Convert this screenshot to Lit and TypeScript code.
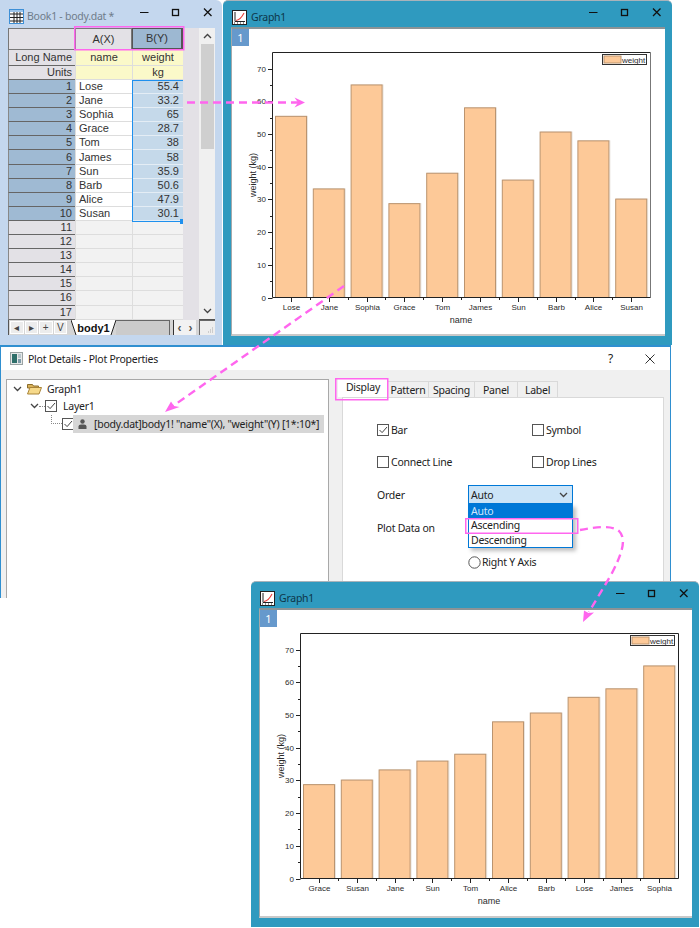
import { LitElement, html, css, svg } from "lit";
import { customElement, property } from "lit/decorators.js";

type Datum = [string, number];
const DATA: Datum[] = [
  ["Lose", 55.4], ["Jane", 33.2], ["Sophia", 65], ["Grace", 28.7], ["Tom", 38],
  ["James", 58], ["Sun", 35.9], ["Barb", 50.6], ["Alice", 47.9], ["Susan", 30.1],
];
const SORTED: Datum[] = [...DATA].sort((a, b) => a[1] - b[1]);

@customElement("bar-chart")
class BarChart extends LitElement {
  @property({ type: Array }) data: Datum[] = [];
  @property() rightEdge = "#777";
  static styles = css`
    :host { display: block; width: 433px; height: 306px; }
    svg { display: block; }
    text { font-family: "Liberation Sans", Arial, sans-serif; font-size: 8px; fill: #2b2b2b; }
    text.big { font-size: 9px; }
    .bar { fill: #fdc998; stroke: #bb946f; stroke-width: 1; }
    .shadow { fill: none; stroke: #e9e4df; stroke-width: 1; }
    .axis { stroke: #222; stroke-width: 1; fill: none; }
    .legend-box { fill: #fff; stroke: #333; stroke-width: 1; }
    .legend-swatch { fill: #fdc998; stroke: #bb946f; stroke-width: 1; }
  `;
  render() {
    const L = 40.5, T = 23.5, R = 418.5, B = 268.5, U = 3.27;
    const step = 37.8, w = 31, x0 = 43.5;
    const yTicks = [0, 5, 10, 15, 20, 25, 30, 35, 40, 45, 50, 55, 60, 65, 70];
    return html`<svg width="433" height="306" viewBox="0 0 433 306">
      <path class="axis" d="M${L} ${T}H${R}"></path>
      <path d="M${R} ${T}V${B}" fill="none" stroke=${this.rightEdge}></path>
      ${this.data.map(([, v], i) => {
        const x = x0 + i * step, h = v * U;
        return svg`<rect class="shadow" x=${x + 1} y=${B - h} width=${w} height=${h}></rect>
          <rect class="bar" x=${x} y=${B - h} width=${w} height=${h}></rect>`;
      })}
      <path class="axis" d="M${L} ${T}V${B}H${R}"></path>
      ${yTicks.map((t) => {
        const y = Math.round(B - t * U) + 0.5;
        const major = t % 10 === 0;
        return svg`<path class="axis" d="M${L} ${y}H${L - (major ? 4.5 : 2.5)}"></path>
          ${major ? svg`<text x=${L - 6.5} y=${y + 2.5} text-anchor="end">${t}</text>` : ""}`;
      })}
      ${this.data.map(([n], i) => {
        const c = Math.round(x0 + i * step + w / 2) + 0.5;
        const m = Math.round(x0 + i * step - 3.4) + 0.5;
        return svg`<path class="axis" d="M${c} ${B}v4.5"></path>
          ${i > 0 ? svg`<path class="axis" d="M${m} ${B}v2.5"></path>` : ""}
          <text x=${c} y=${B + 12} text-anchor="middle">${n}</text>`;
      })}
      <text class="big" x="229" y="294" text-anchor="middle">name</text>
      <text class="big" transform="translate(24 146) rotate(-90)" text-anchor="middle">weight (kg)</text>
      <rect class="legend-box" x="370.5" y="25.5" width="44" height="10"></rect>
      <rect class="legend-swatch" x="372" y="27" width="17" height="7"></rect>
      <text x="390" y="33.5">weight</text>
    </svg>`;
  }
}

const minMaxClose = html`<svg class="caption" width="75" height="12" viewBox="0 0 75 12">
  <path d="M0 5.5H8.5" stroke="#111" fill="none"></path>
  <rect x="32.5" y="2.5" width="6" height="6" fill="none" stroke="#111" stroke-width="1.3"></rect>
  <path d="M64 1.5l7.5 7.5M71.5 1.5L64 9" stroke="#111" stroke-width="1.3" fill="none"></path>
</svg>`;

const graphIcon = html`<svg width="15" height="15" viewBox="0 0 15 15">
  <rect x="0.5" y="0.5" width="14" height="14" fill="#fff" stroke="#222"></rect>
  <path d="M3 2v9.5h10" fill="none" stroke="#222"></path>
  <path d="M4 10.5C8 10 10 7 12 3" fill="none" stroke="#e8413c" stroke-width="1.1"></path>
  <path d="M2 13h1M5 13h1M8 13h1M11 13h1" stroke="#222"></path>
</svg>`;

const tick = html`<svg class="nf" width="12" height="12" viewBox="0 0 12 12">
  <rect x="0.5" y="0.5" width="11" height="11" fill="#fff" stroke="#555"></rect>
  <path d="M2.5 6l2.6 2.6L10 3" fill="none" stroke="#444" stroke-width="1"></path>
</svg>`;
const box = html`<svg class="nf" width="12" height="12" viewBox="0 0 12 12">
  <rect x="0.5" y="0.5" width="11" height="11" fill="#fff" stroke="#555"></rect>
</svg>`;
const chevron = html`<svg class="nf" width="9" height="6" viewBox="0 0 9 6"><path d="M1 1l3.5 3.5L8 1" fill="none" stroke="#444" stroke-width="1.3"></path></svg>`;

@customElement("book-window")
class BookWindow extends LitElement {
  static styles = css`
    :host { display: block; width: 222px; height: 345px; box-sizing: border-box; background: #c4d7ee; border-radius: 0 6px 0 0; padding: 0 7px 10px 8px; font-family: "Liberation Sans", Arial, sans-serif; font-size: 11px; color: #333; }
    .title { height: 28px; box-sizing: border-box; padding: 4px 0 0 1px; display: flex; align-items: center; gap: 3px; font-family: "Noto Sans", sans-serif; font-size: 10.5px; letter-spacing: -0.25px; color: #6f7c8a; }
    .title .name { flex: 1; }
    .title .caption { margin-bottom: 6px; }
    .sheet { display: flex; height: 292px; background: #e3e1e6; }
    .table { position: relative; display: grid; grid-template-columns: 67px 57px 51px; grid-template-rows: 22px 16px 14px repeat(17, 14.1px); width: 175px; height: 292px; overflow: hidden; }
    .table > div { box-sizing: border-box; display: flex; align-items: center; min-width: 0; line-height: 1; white-space: nowrap; }
    .h0 { background: #e3e1e6; border: 1px solid #777; justify-content: center; }
    .hb { background: #9db8d2; border: 1px solid #555; border-width: 1px 2px 2px 1px; }
    .lab { background: #e3e1e6; justify-content: flex-end; padding-right: 3px; border-bottom: 1px solid #666; border-left: 1px solid #888; }
    .lab.sel { background: #9fbad3; }
    .yel { background: #fbf9c9; justify-content: center; border-left: 1px solid #ddd; border-bottom: 1px solid #ddd; }
    .nm { background: #fff; padding-left: 3px; border-bottom: 1px solid #ddd; border-left: 1px solid #ddd; }
    .val { background: #c5d9ea; justify-content: flex-end; padding-right: 4px; border-bottom: 1px solid #e4edf5; border-left: 1px solid #ddd; }
    .emp { background: #f2f2f2; border-bottom: 1px solid #ddd; border-left: 1px solid #ddd; }
    .table > .sel-box { position: absolute; left: 124px; top: 52px; width: 52px; height: 142px; border: 1px solid #1e90ee; }
    .table > .handle { position: absolute; left: 172px; top: 191px; width: 3px; height: 5px; background: #1e90ee; }
    .gap { width: 16px; background: #e3e1e6; }
    .vscroll { width: 16px; background: #f0f0f0; display: flex; flex-direction: column; align-items: center; }
    .thumb { width: 13px; height: 105px; background: #cfcfcf; }
    .arrow { height: 16px; display: flex; align-items: center; justify-content: center; }
    .spacer { flex: 1; }
    .line { height: 1px; width: 16px; background: #555; }
    .tabs { height: 15px; display: flex; align-items: stretch; background: #d5d5d5; border-left: 1px solid #555; }
    .nav { display: flex; gap: 1px; padding: 1px 0 1px 1px; }
    .nav button { all: unset; box-sizing: border-box; width: 13.5px; background: #ececec; border: 1px solid #fff; display: flex; align-items: center; justify-content: center; font-size: 10px; line-height: 1; color: #444; }
    .tab { position: relative; width: 45px; margin-left: 4px; font-weight: 700; color: #111; display: flex; align-items: center; justify-content: center; font-size: 11px; }
    .tab svg { position: absolute; left: 0; top: 0; }
    .tab span { position: relative; }
    .rest { width: 54px; background: #cbcbcb; border-top: 1px solid #666; border-right: 1px solid #666; box-sizing: border-box; }
    .nav2 { width: 23px; margin-left: 3px; box-sizing: border-box; border-left: 1px solid #333; background: #f2f2f2; display: flex; align-items: center; justify-content: space-around; font-size: 12px; font-weight: 700; color: #555; }
    .grip { width: 16px; margin-left: 3px; box-sizing: border-box; background: #eee; border-left: 1px solid #666; border-top: 1px solid #666; display: flex; align-items: flex-end; justify-content: flex-end; }
  `;
  render() {
    const rows = Array.from({ length: 17 }, (_, i) => i);
    return html`
      <div class="title">
        <svg width="15" height="15" viewBox="0 0 15 15">
          <rect x="0.5" y="0.5" width="14" height="14" fill="#fff" stroke="#3d8fd6"></rect>
          <path d="M1 5h13M1 8.5h13M1 12h13M5 3v11M8 3v11M11 3v11" stroke="#222" fill="none"></path>
          <rect x="1" y="1" width="13" height="2" fill="#9cc4ea"></rect>
        </svg>
        <span class="name">Book1 - body.dat *</span>
        ${minMaxClose}
      </div>
      <div class="sheet">
        <div class="table">
          <div class="h0"></div><div class="h0">A(X)</div><div class="h0 hb">B(Y)</div>
          <div class="lab">Long Name</div><div class="yel">name</div><div class="yel">weight</div>
          <div class="lab">Units</div><div class="yel"></div><div class="yel">kg</div>
          ${rows.map((i) => {
            const d = DATA[i];
            return html`<div class="lab ${d ? "sel" : ""}">${i + 1}</div>
              <div class=${d ? "nm" : "emp"}>${d ? d[0] : ""}</div>
              <div class=${d ? "val" : "emp"}>${d ? d[1] : ""}</div>`;
          })}
          <div class="sel-box"></div>
          <div class="handle"></div>
        </div>
        <div class="gap"></div>
        <div class="vscroll">
          <div class="arrow"><svg width="9" height="6" viewBox="0 0 9 6"><path d="M1 5l3.5-3.5L8 5" fill="none" stroke="#444" stroke-width="1.4"></path></svg></div>
          <div class="thumb"></div>
          <div class="spacer"></div>
          <div class="arrow">${chevron}</div>
          <div class="line"></div>
        </div>
      </div>
      <div class="tabs">
        <div class="nav"><button>◂</button><button>▸</button><button>+</button><button>V</button></div>
        <div class="tab">
          <svg width="45" height="15" viewBox="0 0 45 15">
            <path d="M0 0L5 15H40L45 0z" fill="#fff"></path>
            <path d="M0 0L5 15M45 0L40 15" stroke="#222" fill="none"></path>
          </svg>
          <span>body1</span>
        </div>
        <div class="rest"></div>
        <div class="nav2"><span>‹</span><span>›</span></div>
        <div class="grip"><svg width="8" height="8" viewBox="0 0 8 8"><path d="M5 1h1M3 3h1M5 3h1M1 5h1M3 5h1M5 5h1" stroke="#aaa" fill="none"></path></svg></div>
      </div>
    `;
  }
}

@customElement("graph-window")
class GraphWindow extends LitElement {
  @property({ type: Array }) data: Datum[] = [];
  @property() rightEdge = "#777";
  static styles = css`
    :host { display: block; box-sizing: border-box; width: 100%; height: 100%; background: #2f9abf; border-radius: 5px 5px 0 0; border-top: 1px solid #a9b3ba; padding: 0 7px 9px 8px; font-family: "Noto Sans", sans-serif; }
    .title { height: 26px; box-sizing: border-box; padding: 6px 0 0 1px; display: flex; align-items: center; gap: 4px; font-size: 10.5px; letter-spacing: -0.25px; color: #0d3648; }
    .title .name { flex: 1; }
    .title .caption { margin: 0 1px 8px 0; }
    .inner { position: relative; background: #fff; border-top: 2px solid #8b9396; border-left: 1px solid #a5a9ab; border-bottom: 2px solid #c9c9c9; height: calc(100% - 26px); box-sizing: border-box; }
    .badge { position: absolute; left: 0; top: 0; width: 17px; height: 17px; background: #6699cc; color: #fff; display: flex; align-items: center; justify-content: center; font-size: 11px; }
  `;
  render() {
    return html`
      <div class="title">${graphIcon}<span class="name">Graph1</span>${minMaxClose}</div>
      <div class="inner">
        <div class="badge">1</div>
        <bar-chart .data=${this.data} .rightEdge=${this.rightEdge}></bar-chart>
      </div>`;
  }
}

@customElement("details-dialog")
class DetailsDialog extends LitElement {
  static styles = css`
    :host { display: flex; flex-direction: column; width: 671px; height: 253px; box-sizing: border-box; background: #f0f0f0; border: 1px solid #2f8fd0; border-width: 2px 1px 0 1px; font-family: "Noto Sans", sans-serif; font-size: 10.5px; letter-spacing: -0.25px; color: #222; }
    .nf { flex: none; }
    .title { height: 23px; flex: none; background: #fff; display: flex; align-items: center; padding-left: 9px; }
    .title .name { flex: 1; margin-left: 5px; }
    .help { width: 39px; text-align: center; font-size: 12px; }
    .close { width: 40px; display: flex; justify-content: center; }
    .body { flex: 1; display: flex; min-height: 0; padding: 9px 0 0 5px; }
    .tree { width: 323px; box-sizing: border-box; background: #fff; border: 1px solid #a8a8a8; border-bottom: 0; }
    .row { height: 17.5px; display: flex; align-items: center; }
    .row.r1 { padding-left: 6px; gap: 5px; }
    .row.r2 { padding-left: 23px; }
    .row.r3 { padding-left: 55px; }
    .dots { width: 6px; border-top: 1px dotted #888; }
    .dots.elbow { box-sizing: border-box; width: 11px; height: 9px; border-top: 0; border-left: 1px dotted #888; border-bottom: 1px dotted #888; margin: -9px 0 0 -11px; flex: none; }
    .row.r2 .lbl { margin-left: 6px; }
    .hl { display: flex; align-items: center; width: 251px; height: 18px; flex: none; background: #d6d6d6; margin-left: -1px; padding-left: 5px; box-sizing: border-box; gap: 7px; white-space: nowrap; }
    .right { flex: 1; padding: 0 6px 0 13px; min-width: 0; display: flex; flex-direction: column; }
    .tabs { height: 18px; display: flex; align-items: flex-end; flex: none; margin-left: -4px; }
    .tab { box-sizing: border-box; height: 16px; display: flex; align-items: center; justify-content: center; background: #f0f0f0; border: 1px solid #d9d9d9; border-bottom: 0; border-left: 0; }
    .tab.on { height: 18px; background: #fff; width: 50px; border: 0; padding-bottom: 3px; }
    .page { flex: 1; background: #fff; border: 1px solid #d9d9d9; border-bottom: 0; padding: 24px 0 0 34px; box-sizing: border-box; }
    .checks { display: grid; grid-template-columns: 155px 130px; row-gap: 16px; }
    .check { display: flex; align-items: center; gap: 2px; height: 16px; }
    .field { display: flex; align-items: center; }
    .field .label { width: 91px; flex: none; }
    .order { margin-top: 15px; height: 19px; }
    .combo-wrap { position: relative; width: 105px; height: 19px; }
    .combo { box-sizing: border-box; height: 19px; background: #cce4f7; border: 1px solid #0078d7; display: flex; align-items: center; justify-content: space-between; padding: 0 4px 0 2px; }
    .list { position: absolute; left: 0; top: 19px; width: 105px; box-sizing: border-box; border: 1px solid #0078d7; border-top: 0; background: #fff; box-shadow: 3px 3px 4px rgba(0,0,0,.25); }
    .opt { height: 14.3px; display: flex; align-items: center; padding-left: 2px; }
    .opt.on { background: #0078d7; color: #cfe6fb; }
    .plot { margin-top: 16px; height: 16px; }
    .radio { margin: 18px 0 0 91px; display: flex; align-items: center; gap: 1px; height: 16px; }
  `;
  render() {
    return html`
      <div class="title">
        <svg width="13" height="13" viewBox="0 0 13 13">
          <rect x="0.5" y="0.5" width="12" height="12" fill="#e6e8e8" stroke="#9aa3a3"></rect>
          <rect x="2" y="2" width="5" height="9" fill="#2f6f6a"></rect>
          <rect x="8" y="2" width="3" height="4" fill="#b7c6cc"></rect>
          <rect x="8" y="7" width="3" height="4" fill="#7d9aa8"></rect>
        </svg>
        <span class="name">Plot Details - Plot Properties</span>
        <span class="help">?</span>
        <span class="close"><svg width="10" height="10" viewBox="0 0 10 10"><path d="M.5.5l9 9M9.5.5l-9 9" stroke="#333" fill="none"></path></svg></span>
      </div>
      <div class="body">
        <div class="tree">
          <div class="row r1">
            ${chevron}
            <svg width="15" height="13" viewBox="0 0 15 13">
              <path d="M.5 2.5h5l1 1.5h5v2H.5z" fill="#d9b25a" stroke="#8c6d2a"></path>
              <path d="M.5 12L3 5.5h11.5L12 12z" fill="#f6d98a" stroke="#a98439"></path>
            </svg>
            <span>Graph1</span>
          </div>
          <div class="row r2">
            ${chevron}
            <span class="dots"></span>
            ${tick}
            <span class="lbl">Layer1</span>
          </div>
          <div class="row r3">
            <span class="dots elbow"></span>
            ${tick}
            <div class="hl">
              <svg class="nf" width="9" height="10" viewBox="0 0 9 10"><circle cx="4.5" cy="2.5" r="2.2" fill="#555"></circle><path d="M.5 10V7.5Q.5 5.5 3 5.5h3Q8.5 5.5 8.5 7.5V10z" fill="#555"></path></svg>
              <span>[body.dat]body1! "name"(X), "weight"(Y) [1*:10*]</span>
            </div>
          </div>
        </div>
        <div class="right">
          <div class="tabs">
            <div class="tab on">Display</div>
            <div class="tab" style="width:41px">Pattern</div>
            <div class="tab" style="width:46px">Spacing</div>
            <div class="tab" style="width:43px">Panel</div>
            <div class="tab" style="width:40px">Label</div>
          </div>
          <div class="page">
            <div class="checks">
              <div class="check">${tick}Bar</div>
              <div class="check">${box}Symbol</div>
              <div class="check">${box}Connect Line</div>
              <div class="check">${box}Drop Lines</div>
            </div>
            <div class="field order">
              <span class="label">Order</span>
              <div class="combo-wrap">
                <div class="combo"><span>Auto</span>${chevron}</div>
                <div class="list">
                  <div class="opt on">Auto</div>
                  <div class="opt">Ascending</div>
                  <div class="opt">Descending</div>
                </div>
              </div>
            </div>
            <div class="field plot"><span class="label">Plot Data on</span></div>
            <div class="radio">
              <svg class="nf" width="13" height="13" viewBox="0 0 13 13"><circle cx="6.5" cy="6.5" r="5.7" fill="#fff" stroke="#555"></circle></svg>
              Right Y Axis
            </div>
          </div>
        </div>
      </div>
    `;
  }
}

@customElement("app-root")
export class AppRoot extends LitElement {
  static styles = css`
    :host { display: block; position: relative; width: 700px; height: 928px; overflow: hidden; background: #fff; }
    .win { position: absolute; }
    .book { left: 0; top: 0; }
    .g1 { left: 223px; top: 0; width: 449px; height: 345px; }
    .dlg { left: 0; top: 345px; }
    .g2 { left: 251px; top: 581px; width: 448px; height: 346px; }
    .overlay { position: absolute; left: 0; top: 0; pointer-events: none; }
    .pink { fill: none; stroke: #ff66ee; stroke-width: 1.5; }
    .dash { fill: none; stroke: #ff66ee; stroke-width: 2.4; stroke-dasharray: 8 5; }
    .head { fill: #ff66ee; }
  `;
  render() {
    return html`
      <book-window class="win book"></book-window>
      <graph-window class="win g1" .data=${DATA}></graph-window>
      <details-dialog class="win dlg"></details-dialog>
      <graph-window class="win g2" .data=${SORTED} rightEdge="#222"></graph-window>
      <svg class="overlay" width="700" height="928" viewBox="0 0 700 928">
        <rect class="pink" x="74.75" y="26.75" width="109" height="23"></rect>
        <rect class="pink" x="335.75" y="378.75" width="52" height="21"></rect>
        <rect class="pink" x="465.75" y="518.75" width="112" height="14.5"></rect>
        <path class="dash" d="M187 102.5H298"></path>
        <path class="head" d="M294.5 97.5L305 102.5L294.5 107.5L298 102.5z"></path>
        <path class="dash" d="M344 286L173 406"></path>
        <path class="head" d="M165 412L171 401.5L174 406L179.5 407z"></path>
        <path class="dash" d="M580 530C595 527 612 525 619 531C627 539 622 554 611 575L589 612"></path>
        <path class="head" d="M583 622L584 610.5L588.5 613L594 612.5z"></path>
      </svg>
    `;
  }
}
